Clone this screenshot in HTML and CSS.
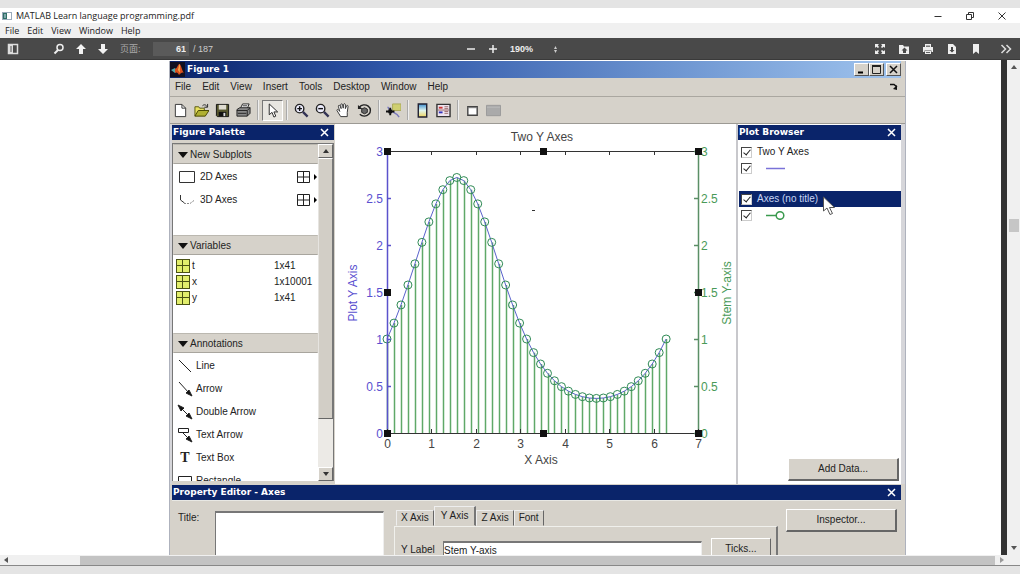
FILE: index.html
```html
<!DOCTYPE html>
<html lang="en">
<head>
<meta charset="utf-8">
<title>MATLAB Learn language programming.pdf</title>
<link rel="stylesheet" href="styles.css">
</head>
<body>
<div class="viewer">
  <header class="titlebar">
    <svg class="doc-icon" width="10" height="8" viewBox="0 0 10 8"><rect x=".5" y=".5" width="9" height="7" fill="#fff" stroke="#9ab"/><path d="M1 1h4v6H1z" fill="#2f6f66"/><path d="M3 2v4" stroke="#cde"/></svg>
    <h1 class="doc-title">MATLAB Learn language programming.pdf</h1>
    <div class="win-buttons">
      <button aria-label="Minimize"><svg width="10" height="10" viewBox="0 0 10 10"><path d="M1.500 5.500h7"/></svg></button>
      <button aria-label="Restore"><svg width="10" height="10" viewBox="0 0 10 10"><path d="M1.500 3.500h5v5h-5zM3.500 3.500v-2h5v5h-2"/></svg></button>
      <button aria-label="Close"><svg width="10" height="10" viewBox="0 0 10 10"><path d="M1.500 1.500l7 7M8.500 1.500l-7 7"/></svg></button>
    </div>
  </header>
  <nav class="app-menu">
    <button>File</button><button>Edit</button><button>View</button><button>Window</button><button>Help</button>
  </nav>
  <div class="pdf-toolbar">
    <div class="tools">
      <button aria-label="Sidebar"><svg width="12" height="12" viewBox="0 0 12 12"><rect x="1.500" y="1.500" width="9" height="9" fill="none" stroke="#ddd" stroke-width="1.500"/><path d="M2 2h4v8H2z" fill="#ddd"/><path d="M3 4h2M3 6h2M3 8h2" stroke="#555"/></svg></button>
      <button class="find" aria-label="Find"><svg width="12" height="12" viewBox="0 0 12 12"><circle cx="7" cy="4.500" r="3" fill="none" stroke="#eee" stroke-width="1.500"/><path d="M5 7L1.500 10.500" stroke="#eee" stroke-width="2"/></svg></button>
      <button aria-label="Previous page"><svg width="12" height="12" viewBox="0 0 12 12"><path d="M6 1l5 5H8v5H4V6H1z" fill="#f2f2f2"/></svg></button>
      <button aria-label="Next page"><svg width="12" height="12" viewBox="0 0 12 12"><path d="M6 11l5-5H8V1H4v5H1z" fill="#f2f2f2"/></svg></button>
      <label class="page-label" for="page">页面:</label>
      <input class="page-input" id="page" value="61">
      <span class="page-total">/ 187</span>
    </div>
    <div class="tools">
      <button aria-label="Zoom out"><svg width="10" height="10" viewBox="0 0 10 10"><path d="M1 5h8" stroke="#eee" stroke-width="1.500"/></svg></button>
      <button aria-label="Zoom in"><svg width="10" height="10" viewBox="0 0 10 10"><path d="M1 5h8M5 1v8" stroke="#eee" stroke-width="1.500"/></svg></button>
      <span class="zoom-box"><select class="zoom" aria-label="Zoom"><option>190%</option></select><svg width="5" height="9" viewBox="0 0 5 9"><path d="M2.500 1L4 4H1zM2.500 8L4 5H1z" fill="#ccc"/></svg></span>
    </div>
    <div class="tools tools-end">
      <button aria-label="Full screen"><svg width="12" height="12" viewBox="0 0 12 12" fill="#eee"><path d="M1 1h4L3.800 2.200 5 4 4 5 2.200 3.800 1 5zM11 1v4L9.800 3.800 8 5 7 4 8.200 2.200 7 1zM1 11V7l1.200 1.200L4 7 5 8 3.800 9.800 5 11zM11 11H7l1.200-1.200L7 8 8 7l1.800 1.200L11 7z"/></svg></button>
      <button aria-label="Open"><svg width="12" height="12" viewBox="0 0 12 12"><path d="M1 2h4l1 1.500h5V11H1z" fill="#eee"/><path d="M6.500 4.500l3 3H8V10H5V7.500H3.500z" fill="#4a4a4a"/></svg></button>
      <button aria-label="Print"><svg width="12" height="12" viewBox="0 0 12 12"><path d="M3 1h6v3h2v5H9.500V7.500h-7V9H1V4h2z" fill="#eee"/><path d="M4 2.500h4V4H4z" fill="#777"/><path d="M3 8h6v3H3z" fill="#eee"/><path d="M4 9.500h4" stroke="#666"/></svg></button>
      <button aria-label="Download"><svg width="12" height="12" viewBox="0 0 12 12"><path d="M2 1h5l3 3v7H2z" fill="#eee"/><path d="M6 9.500L3.500 7H5V4h2v3h1.500z" fill="#444"/></svg></button>
      <button aria-label="Bookmark"><svg width="12" height="12" viewBox="0 0 12 12"><path d="M3 1h6v10L6 8.500 3 11z" fill="#eee"/></svg></button>
      <button class="more" aria-label="More tools"><svg width="12" height="12" viewBox="0 0 12 12"><path d="M1.500 2l4 4-4 4M6.500 2l4 4-4 4" fill="none" stroke="#ddd" stroke-width="1.500"/></svg></button>
    </div>
  </div>

  <main class="document">
    <section class="figure-window">
      <div class="fig-title">
        <svg width="15" height="15" viewBox="0 0 15 13"><path d="M0-1h15v15H0z" fill="#101020"/><path d="M1 7l4-2 2 3-2 2z" fill="#5aa"/><path d="M5 6c2 0 3-5 4.500-5C11 1 12 8 14 10c-2-1-3 0-5 2-1-2-2-3-4-2z" fill="#d8501c"/><path d="M9.500 1c1 1 0 5 .5 9l-2-3z" fill="#f5b050"/></svg>
        <h2>Figure 1</h2>
        <div class="fig-buttons">
          <button aria-label="Minimize figure"><svg width="9" height="9" viewBox="0 0 9 9"><path d="M1 7.500h5" stroke="#000" stroke-width="2"/></svg></button>
          <button aria-label="Maximize figure"><svg width="9" height="9" viewBox="0 0 9 9"><path d="M.5 1v7.500h8V1" fill="none" stroke="#222"/><path d="M0 1h9" stroke="#222" stroke-width="2"/></svg></button>
          <button class="close" aria-label="Close figure"><svg width="9" height="9" viewBox="0 0 9 9"><path d="M1 1l7 7M8 1L1 8" stroke="#111" stroke-width="1.500"/></svg></button>
        </div>
      </div>
      <nav class="fig-menu">
        <button>File</button><button>Edit</button><button>View</button><button>Insert</button><button>Tools</button><button>Desktop</button><button>Window</button><button>Help</button>
        <button class="dock" aria-label="Dock"><svg width="8" height="8" viewBox="0 0 8 8"><path d="M0 1.500h4L7 4" fill="none" stroke="#111" stroke-width="1.500"/><path d="M7 2v5L3 6z" fill="#111"/></svg></button>
      </nav>
      <div class="fig-toolbar">
        <button aria-label="New"><svg viewBox="0 0 16 16"><path d="M2.500 1.500h7l4 4v9h-11z" fill="#fff" stroke="#333"/><path d="M9.500 1.500v4h4" fill="none" stroke="#333"/></svg></button>
        <button aria-label="Open"><svg viewBox="0 0 16 16"><path d="M1 14V4h4l1 1.500h5V8" fill="#e8e060" stroke="#555510"/><path d="M1 14l3.500-6H16l-4 6z" fill="#b0b032" stroke="#444400"/><path d="M9 3c2-2 4-1 5 1M14.500 1v3.500H11" fill="none" stroke="#222"/></svg></button>
        <button aria-label="Save"><svg viewBox="0 0 16 16"><path d="M1.500 1.500h13v13h-12l-1-1z" fill="#56562e" stroke="#111"/><path d="M4 2h8v5H4z" fill="#dedbd0"/><path d="M4 9.500h8V14H4z" fill="#111"/><path d="M9 10.500h2V14H9z" fill="#ddd"/></svg></button>
        <button aria-label="Print"><svg viewBox="0 0 16 16"><path d="M5 5l2-4h7l-2 5" fill="#fff" stroke="#222"/><path d="M1 7l3-2h11v6l-3 3H1z" fill="#888" stroke="#222"/><path d="M1 8h11l3-3M12 8v6M2 11h9M7 3h5" fill="none" stroke="#222"/></svg></button>
        <i class="sep"></i>
        <button class="pressed" aria-label="Edit plot"><svg viewBox="0 0 16 16"><path d="M4.500 1v11.500l3-2.500 2 5 2-1-2-4.500h4z" fill="#fff" stroke="#222"/></svg></button>
        <i class="sep"></i>
        <button aria-label="Zoom in"><svg viewBox="0 0 16 16"><circle cx="6" cy="6" r="4.500" fill="#eef" stroke="#222" stroke-width="1.500"/><path d="M3.500 6h5M6 3.500v5" stroke="#111" stroke-width="1.500"/><path d="M9.500 9.500l5 5" stroke="#335" stroke-width="2.500"/></svg></button>
        <button aria-label="Zoom out"><svg viewBox="0 0 16 16"><circle cx="6" cy="6" r="4.500" fill="#eef" stroke="#222" stroke-width="1.500"/><path d="M3.500 6h5" stroke="#111" stroke-width="1.500"/><path d="M9.500 9.500l5 5" stroke="#335" stroke-width="2.500"/></svg></button>
        <button aria-label="Pan"><svg viewBox="0 0 16 16"><path d="M5 14.500L1 8c0-2 2-1 3 1L2.500 3.500c0-1.500 1.500-1.500 2 0l1 2.500-.5-4c0-1.500 2-1.500 2 0l.7 3.500.3-4c.5-1.200 2-1 2 .5V6l1.200-3c.8-1 2-.3 1.600 1L12 10v4.500z" fill="#fff" stroke="#333"/></svg></button>
        <button aria-label="Rotate"><svg viewBox="0 0 16 16"><path d="M2.500 4.500A6.500 6 0 1 1 3 12" fill="none" stroke="#222" stroke-width="1.500"/><path d="M1 2v4.500h5z" fill="#222"/><path d="M5 6.500l3-1.500 3 1.500v3.500l-3 1.500-3-1.500z" fill="#666" stroke="#222"/></svg></button>
        <i class="sep"></i>
        <button aria-label="Data cursor"><svg viewBox="0 0 16 16"><path d="M7 1h9v7H7z" fill="#cfcf70" stroke="#aaaa58"/><path d="M2 4c1 6 7 4 12 11" fill="none" stroke="#77b" stroke-width="1.500"/><path d="M0 9h9M4.500 5v8" stroke="#111" stroke-width="2"/><path d="M2.500 7h4v4h-4z" fill="#111"/></svg></button>
        <i class="sep"></i>
        <button aria-label="Colorbar"><svg viewBox="0 0 16 16"><defs><linearGradient id="bar" x2="0" y2="1"><stop stop-color="#3b8ed0"/><stop offset=".5" stop-color="#dff4ee"/><stop offset="1" stop-color="#eed45c"/></linearGradient></defs><path d="M3.500 1h9v14h-9z" fill="url(#bar)" stroke="#223" stroke-width="1.500"/></svg></button>
        <button aria-label="Legend"><svg viewBox="0 0 16 16"><path d="M1 1.500h14v13H1z" fill="#eee4ee" stroke="#333" stroke-width="1.500"/><path d="M3 5h4" stroke="#c33" stroke-width="2"/><path d="M3 10h4" stroke="#33b" stroke-width="2"/><path d="M9 4h4M9 6h4M9 9h4M9 11h4M2 7.500h12" stroke="#966"/></svg></button>
        <i class="sep"></i>
        <button aria-label="Hide plot tools"><svg viewBox="0 0 16 16"><path d="M3 4h10v9H3z" fill="#fff" stroke="#444" stroke-width="1.500"/><path d="M3 5h10" stroke="#777"/></svg></button>
        <button aria-label="Show plot tools"><svg viewBox="0 0 16 16"><path d="M.5 2.500h15v11H.5z" fill="#aaa" stroke="#999"/><path d="M1 4.500h14" stroke="#bbb"/></svg></button>
      </div>

      <div class="workspace">
        <aside class="palette">
          <div class="panel-title"><h3>Figure Palette</h3><button aria-label="Close palette"><svg width="9" height="9" viewBox="0 0 9 9"><path d="M1 1l7 7M8 1L1 8" stroke="#fff" stroke-width="1.500"/></svg></button></div>
          <div class="palette-body">
            <div class="palette-list">
              <h4>New Subplots</h4>
              <ul class="subplots">
                <li><svg width="18" height="14" viewBox="0 0 18 14"><path d="M1.500 1.500h15v11h-15z" fill="#fff" stroke="#333"/></svg><span>2D Axes</span><svg class="grid-icon" width="22" height="14" viewBox="0 0 22 14"><path d="M1.500 1.500h12v11h-12zM7.500 1.500v11M1.500 7h12" fill="none" stroke="#222"/><path d="M18 4l3 3-3 3z"/></svg></li>
                <li><svg width="18" height="14" viewBox="0 0 18 14"><path d="M2.500 2v5l4 3" fill="none" stroke="#333"/><path d="M6 10.500h6l4-3" fill="none" stroke="#888" stroke-dasharray="2 1"/></svg><span>3D Axes</span><svg class="grid-icon" width="22" height="14" viewBox="0 0 22 14"><path d="M1.500 1.500h12v11h-12zM7.500 1.500v11M1.500 7h12" fill="none" stroke="#222"/><path d="M18 4l3 3-3 3z"/></svg></li>
              </ul>
              <h4>Variables</h4>
              <ul class="variables">
                <li><i class="var-icon"></i><span>t</span><span>1x41</span></li>
                <li><i class="var-icon"></i><span>x</span><span>1x10001</span></li>
                <li><i class="var-icon"></i><span>y</span><span>1x41</span></li>
              </ul>
              <h4>Annotations</h4>
              <ul class="annotations">
                <li><svg width="16" height="16" viewBox="0 0 16 16"><path d="M2 2l12 12"/></svg>Line</li>
                <li><svg width="16" height="16" viewBox="0 0 16 16"><path d="M2 1l10 11"/><path d="M15 15l-6-3 3-3z"/></svg>Arrow</li>
                <li><svg width="16" height="16" viewBox="0 0 16 16"><path d="M3 3l10 10"/><path d="M15 15l-6-3 3-3zM1 1l6 3-3 3z"/></svg>Double Arrow</li>
                <li><svg width="16" height="16" viewBox="0 0 16 16"><path d="M1.500 1.500h10v4h-10zM6 6l6 6"/><path d="M15 15l-6-3 3-3z"/></svg>Text Arrow</li>
                <li><b class="t-icon">T</b>Text Box</li>
                <li><svg width="16" height="16" viewBox="0 0 16 16"><path d="M1.500 3.500h13v9h-13z"/></svg>Rectangle</li>
              </ul>
            </div>
            <div class="palette-scroll">
              <button aria-label="Scroll up"><svg width="6" height="4" viewBox="0 0 6 4"><path d="M3 0l3 4H0z" fill="#333"/></svg></button>
              <i class="thumb"></i>
              <button class="last" aria-label="Scroll down"><svg width="6" height="4" viewBox="0 0 6 4"><path d="M3 4l3-4H0z" fill="#333"/></svg></button>
            </div>
          </div>
        </aside>

        <div class="plot">
          <svg id="chart" viewBox="0 0 401 359" role="img" aria-label="Two Y Axes"></svg>
        </div>

        <aside class="browser">
          <div class="panel-title"><h3>Plot Browser</h3><button aria-label="Close browser"><svg width="9" height="9" viewBox="0 0 9 9"><path d="M1 1l7 7M8 1L1 8" stroke="#fff" stroke-width="1.500"/></svg></button></div>
          <div class="browser-list">
            <label class="row"><input type="checkbox" checked><span>Two Y Axes</span></label>
            <label class="row" aria-label="Line series"><input type="checkbox" checked><svg width="36" height="10" viewBox="0 0 36 10"><path d="M9 5.500h19" stroke="#7a72d8" stroke-width="1.500"/></svg></label>
            <label class="row selected"><input type="checkbox" checked><span>Axes (no title)</span>
              <svg class="pointer" width="14" height="20" viewBox="0 0 14 20"><path d="M1.500 1v14l3.500-3 3 6.500 2.500-1-3-6h5z" fill="#fff" stroke="#555"/></svg></label>
            <label class="row" aria-label="Stem series"><input type="checkbox" checked><svg width="36" height="10" viewBox="0 0 36 10"><path d="M9 5.500h10" stroke="#3a9a4e" stroke-width="1.500"/><circle cx="23" cy="5.500" r="3.800" fill="none" stroke="#3a9a4e" stroke-width="1.500"/></svg></label>
          </div>
          <button class="raised add-data">Add Data...</button>
        </aside>
      </div>

      <div class="editor">
        <div class="panel-title"><h3>Property Editor - Axes</h3><button aria-label="Close editor"><svg width="9" height="9" viewBox="0 0 9 9"><path d="M1 1l7 7M8 1L1 8" stroke="#fff" stroke-width="1.500"/></svg></button></div>
        <div class="editor-body">
          <label for="title-text">Title:</label>
          <textarea id="title-text"></textarea>
          <div class="tab-area">
            <div class="tabs" role="tablist">
              <button role="tab">X Axis</button><button role="tab" class="active" aria-selected="true">Y Axis</button><button role="tab">Z Axis</button><button role="tab">Font</button>
            </div>
            <div class="tab-panel">
              <label for="ylabel">Y Label</label>
              <input id="ylabel" value="Stem Y-axis">
              <button class="raised">Ticks...</button>
            </div>
          </div>
          <button class="raised inspector">Inspector...</button>
        </div>
      </div>
    </section>
    <div class="page-edge"></div>
    <div class="v-scroll">
      <svg width="6" height="4" viewBox="0 0 6 4"><path d="M3 0l3 4H0z" fill="#555"/></svg>
      <i class="v-thumb"></i>
      <svg width="6" height="4" viewBox="0 0 6 4"><path d="M3 4l3-4H0z" fill="#555"/></svg>
    </div>
  </main>
  <div class="h-scroll">
    <svg width="4" height="6" viewBox="0 0 4 6"><path d="M0 3l4-3v6z" fill="#555"/></svg>
    <i class="h-thumb"></i>
    <svg width="4" height="6" viewBox="0 0 4 6"><path d="M4 3L0 0v6z" fill="#999"/></svg>
  </div>
</div>
<script src="chart.js"></script>
</body>
</html>
```

FILE: styles.css
```css
* { box-sizing: border-box; }
body { margin: 0; background: #e4e4e4; font: 10px/14px "Liberation Sans", "Noto Sans CJK SC", sans-serif; color: #222; }
h1, h2, h3, h4, ul { margin: 0; padding: 0; font-size: inherit; font-weight: normal; list-style: none; }
button { margin: 0; padding: 0; border: 0; background: none; font: inherit; color: inherit; display: flex; align-items: center; justify-content: center; white-space: nowrap; }
svg { display: block; flex: none; }
.viewer { height: 100vh; padding: 8px 0; display: flex; flex-direction: column; }

.titlebar { display: flex; align-items: center; flex: none; height: 15px; background: #fff; padding-left: 2px; gap: 4px; font: 9px/15px "Open Sans", sans-serif; }
.doc-title { flex: 1; }
.win-buttons { display: flex; padding-right: 2px; }
.win-buttons button { width: 32px; height: 14px; }
.win-buttons path { fill: none; stroke: #333; }
.app-menu { display: flex; align-items: center; flex: none; gap: 8px; height: 15px; padding-left: 5px; background: #f0f0f0; font: 9px/15px "Open Sans", sans-serif; }

.pdf-toolbar { display: grid; grid-template-columns: 1fr auto 1fr; align-items: center; flex: none; height: 22px; background: #494949; border-bottom: 1px solid #3a3a3a; color: #ccc; font-size: 9px; }
.tools { display: flex; align-items: center; padding-left: 2px; }
.tools button { width: 22px; height: 22px; }
.tools .find { margin-left: 24px; }
.page-label { margin: 0 13px 0 6px; width: 20px; font-size: 9px; white-space: nowrap; color: #aaa; }
.page-input { width: 36px; height: 14px; border: 0; padding: 0 3px; background: #5a5a5a; color: #eee; font: bold 9px/14px "Liberation Sans", sans-serif; text-align: right; }
.page-total { margin-left: 4px; }
.zoom-box { display: flex; align-items: center; justify-content: space-between; width: 58px; padding: 0 4px 0 6px; }
.zoom { appearance: none; border: 0; padding: 0; background: none; color: #eee; font: bold 9px/14px "Liberation Sans", sans-serif; }
.tools-end { justify-content: flex-end; padding-right: 2px; }
.tools-end button { width: 24px; }
.tools-end .more { margin-left: 6px; }

.document { flex: 1; min-height: 0; display: flex; background: #fff; overflow: hidden; }
.page-edge { width: 6px; background: #333; }
.v-scroll { width: 13px; padding: 5px 0; display: flex; flex-direction: column; align-items: center; background: #f0f0f0; }
.v-thumb { width: 10px; height: 13px; margin: 150px 0 auto; background: #c6c6c6; }
.h-scroll { display: flex; align-items: center; flex: none; height: 11px; padding: 0 16px 0 4px; background: #f0f0f0; border-bottom: 1px solid #888; }
.h-thumb { flex: 1; align-self: stretch; margin: 1px 5px 0 72px; background: #c3c3c3; }

.figure-window { flex: 1; min-width: 0; margin: 1px 95px 0 169px; display: flex; flex-direction: column; background: #d6d2ca; border: 1px solid #aeb2bd; border-width: 0 1px; overflow: hidden; }
.fig-title { display: flex; align-items: center; gap: 2px; flex: none; height: 17px; margin-right: 4px; background: linear-gradient(90deg, #0a246a, #2f56a8 30%, #6c94d0 68%, #a0c4ee); color: #fff; font: bold 9px/17px "DejaVu Sans", sans-serif; }
.fig-title h2 { flex: 1; font-weight: bold; }
.fig-buttons { display: flex; }
.fig-buttons button { width: 15px; height: 13px; background: #d6d2ca; border: 1px solid; border-color: #fff #555 #555 #fff; }
.fig-buttons .close { margin-left: 2px; }
.fig-menu { display: flex; align-items: center; flex: none; gap: 11px; height: 19px; padding: 0 7px 0 5px; border-bottom: 1px solid #aaa7a0; font-size: 10px; }
.fig-menu .dock { margin-left: auto; }
.fig-toolbar { display: flex; align-items: center; flex: none; height: 27px; border-bottom: 1px solid #9c9a94; }
.fig-toolbar button { width: 21px; height: 21px; }
.fig-toolbar svg { width: 15px; height: 15px; }
.fig-toolbar .pressed { background: #e8e6e1; border: 1px solid; border-color: #777 #fff #fff #777; }
.sep { width: 8px; height: 20px; background: linear-gradient(90deg, transparent 3px, #aaa 3px, #aaa 4px, #eee 4px, #eee 5px, transparent 5px); }

.workspace { display: grid; grid-template-columns: 163px 1fr 165px; flex: none; height: 360px; padding: 0 4px 0 2px; background: #d6d6da; }
.panel-title { display: flex; justify-content: space-between; align-items: center; flex: none; height: 15px; padding: 0 5px 0 1px; background: #0a246a; color: #fff; font: bold 9px/15px "DejaVu Sans", sans-serif; }
.panel-title h3 { font-weight: bold; }
.palette { display: flex; flex-direction: column; min-height: 0; padding: 1px 1px 3px 0; background: #d6d2ca; }
.palette-body { display: flex; flex: 1; min-height: 0; margin-top: 3px; border: 1px solid #777; border-width: 1px 1px 0 1px; background: #fff; }
.palette-list { flex: 1; min-width: 0; overflow: hidden; }
.palette h4 { height: 20px; padding: 1px 0 0 4px; display: flex; align-items: center; gap: 2px; background: #d6d2ca; border: 1px solid; border-color: #bbb8b0 #d6d2ca #a8a59e; font-size: 10px; }
.palette h4::before { content: ""; border: 5px solid transparent; border-top: 6px solid #111; border-bottom: 0; }
.subplots { height: 71px; padding-top: 1px; font-size: 10px; }
.subplots li { display: flex; align-items: center; height: 23px; padding-left: 5px; gap: 4px; }
.subplots .grid-icon { margin-left: auto; }
.variables { height: 78px; padding-top: 3px; font-size: 10px; }
.variables li { display: grid; grid-template-columns: 14px 80px 1fr; align-items: center; gap: 2px; height: 16px; padding-left: 3px; }
.var-icon { width: 14px; height: 14px; border: 1px solid #4a5214; background: linear-gradient(90deg, transparent 5px, #4a5214 5px, #4a5214 6px, transparent 6px), linear-gradient(#e2ee6c 5px, #4a5214 5px, #4a5214 6px, #e2ee6c 6px); }
.annotations { padding-top: 1px; font-size: 10px; }
.annotations li { display: flex; align-items: center; gap: 3px; height: 23px; padding-left: 4px; }
.annotations path { fill: none; stroke: #222; }
.annotations path + path { fill: #111; }
.t-icon { width: 16px; text-align: center; font: bold 14px/16px "Liberation Serif", serif; }
.palette-scroll { display: flex; flex-direction: column; width: 15px; background: #eceae6; }
.palette-scroll button, .raised { background: #d6d2ca; border: 1px solid; border-color: #fff #666 #666 #fff; }
.palette-scroll button { height: 14px; }
.palette-scroll .last { margin-top: auto; }
.thumb { height: 261px; background: #d2cec6; border: 1px solid; border-color: #fff #777 #666 #e6e4e0; }

.plot { background: #fff; min-width: 0; display: flex; justify-content: center; }
#chart { width: 100%; height: 359px; }
#chart text { font: 12px "Liberation Sans", sans-serif; fill: #444; }
#chart .left-text { fill: #5a50d0; }
#chart .right-text { fill: #4a9a58; }
#chart .middle { text-anchor: middle; }
#chart .end { text-anchor: end; }
#chart .frame { stroke: #333; fill: none; }
#chart .left-axis { stroke: #5a52cc; stroke-width: 1.5; }
#chart .right-axis { stroke: #5a8f66; stroke-width: 1.5; }
#chart .stem { stroke: #5fa868; stroke-width: 1.5; }
#chart .dot { fill: none; stroke: #2f8a55; }
#chart .curve { fill: none; stroke: #5a62cc; }

.browser { display: flex; flex-direction: column; min-height: 0; padding: 1px 0 3px; background: #fff; border-left: 2px solid #c8c8cc; }
.browser-list { flex: 1; padding: 4px 0 0 1px; }
.row { position: relative; display: flex; align-items: center; height: 16px; gap: 5px; padding-left: 2px; }
.row.selected { margin-top: 15px; background: #0a246a; color: #c8d4f4; }
.row input { appearance: none; flex: none; width: 11px; height: 11px; margin: 0; background: #fff; border: 1px solid; border-color: #444 #ccc #ccc #444; position: relative; }
.row input:checked::after { content: ""; position: absolute; left: 3px; top: 0; width: 3px; height: 6px; border: solid #222; border-width: 0 1px 1px 0; transform: rotate(40deg); }
.pointer { position: absolute; left: 83px; top: 5px; z-index: 1; }
.add-data { align-self: flex-end; width: 111px; height: 23px; margin-right: 2px; border-right-width: 2px; border-bottom-width: 2px; }

.editor { flex: 1; min-height: 0; display: flex; flex-direction: column; padding: 1px 4px 0 2px; }
.editor-body { flex: 1; display: flex; border-top: 1px solid #e8e8e4; padding-left: 6px; }
.editor-body > label { width: 37px; padding-top: 10px; }
#title-text { width: 169px; height: 70px; margin: 10px 10px 0 0; resize: none; background: #fff; border: 2px solid; border-color: #777 #eee #eee #777; border-width: 2px 1px; }
.tab-area { flex: 1; padding-top: 5px; }
.tabs { display: flex; align-items: flex-end; height: 20px; padding-left: 2px; }
.tabs button { height: 16px; padding: 0 4px; border: 1px solid; border-color: #eee #666 transparent #eee; }
.tabs .active { height: 20px; padding: 0 6px; border-right: 2px solid #777; }
.tab-panel { display: flex; align-items: flex-start; height: 60px; padding: 11px 5px 0 6px; border: 1px solid; border-color: #f0f0ec #777 transparent #f0f0ec; border-right-width: 2px; }
.tab-panel label { width: 42px; padding-top: 5px; }
.tab-panel input { flex: 1; min-width: 0; height: 20px; margin-top: 3px; padding: 0 0 2px; border: 2px solid; border-color: #777 #eee #eee #777; border-width: 2px 1px; background: #fff; font: 10px "Liberation Sans", sans-serif; color: #222; }
.tab-panel .raised { width: 60px; height: 22px; margin-left: 9px; }
.inspector { width: 111px; height: 23px; margin: 8px 4px 0 8px; border-right-width: 2px; border-bottom-width: 2px; }
```

FILE: chart.js
```js
const chart = document.getElementById("chart");
const left = 52, right = 363, top_ = 27, bottom = 309;
const px = x => left + (x / 7) * (right - left);
const py = y => bottom - (y / 3) * (bottom - top_);

function add(name, attrs, text) {
  const node = document.createElementNS("http://www.w3.org/2000/svg", name);
  for (const key in attrs) node.setAttribute(key, attrs[key]);
  if (text !== undefined) node.textContent = text;
  chart.appendChild(node);
}
function line(x1, y1, x2, y2, cls) { add("line", { x1, y1, x2, y2, class: cls }); }

const points = [];
for (let i = 0; i <= 40; i++) {
  const x = (i / 40) * 2 * Math.PI;
  points.push([px(x), py(Math.exp(Math.sin(x)))]);
}
points.forEach(([x, y]) => line(Math.round(x) + 0.5, y, Math.round(x) + 0.5, bottom, "stem"));
add("polyline", { points: points.map(p => p.join(",")).join(" "), class: "curve" });
points.forEach(([x, y]) => add("circle", { cx: x, cy: y, r: 4, class: "dot" }));

line(left, top_ + 0.5, right, top_ + 0.5, "frame");
line(left, bottom + 0.5, right, bottom + 0.5, "frame");
line(left + 0.5, top_, left + 0.5, bottom, "left-axis");
line(right + 0.5, top_, right + 0.5, bottom, "right-axis");

for (let x = 0; x <= 7; x++) {
  const at = Math.round(px(x)) + 0.5;
  line(at, top_, at, top_ + 4, "frame");
  line(at, bottom, at, bottom - 4, "frame");
  add("text", { x: at, y: bottom + 15, class: "middle" }, x);
}
for (let y = 0; y <= 3; y += 0.5) {
  const at = Math.round(py(y)) + 0.5;
  line(left, at, left + 4, at, "left-axis");
  line(right - 4, at, right, at, "right-axis");
  add("text", { x: left - 4, y: at + 4, class: "left-text end" }, y);
  add("text", { x: right + 3, y: at + 4, class: "right-text" }, y);
}
for (const x of [0, 3.5, 7]) {
  for (const y of [0, 1.5, 3]) {
    if (x === 3.5 && y === 1.5) continue;
    add("rect", { x: Math.round(px(x)) - 3, y: Math.round(py(y)) - 3, width: 7, height: 7, fill: "#111" });
  }
}
add("text", { x: 207, y: 17, class: "middle" }, "Two Y Axes");
add("text", { x: 206, y: 340, class: "middle" }, "X Axis");
add("text", { transform: "translate(22 169) rotate(-90)", class: "middle left-text" }, "Plot Y Axis");
add("text", { transform: "translate(396 169) rotate(-90)", class: "middle right-text" }, "Stem Y-axis");
line(197, 86.5, 200, 86.5, "frame");
```
